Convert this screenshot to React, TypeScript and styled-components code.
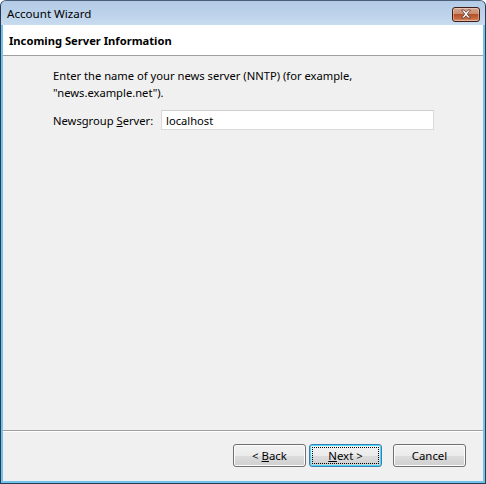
import React from 'react';
import styled, { createGlobalStyle } from 'styled-components';

const GlobalStyle = createGlobalStyle`
  html, body {
    margin: 0;
    padding: 0;
    background: #ffffff;
  }
  body {
    font-family: "Noto Sans", "Open Sans", "DejaVu Sans", sans-serif;
    font-size: 11.2px;
    color: #000;
  }
`;

const Window = styled.div`
  width: 486px;
  height: 484px;
  box-sizing: border-box;
  border: 1px solid #2a3a52;
  border-top-color: #4a5e78;
  border-radius: 6px 6px 0 0;
  background: #6fc3ec;
  display: flex;
  flex-direction: column;
  overflow: hidden;
`;

const TitleBar = styled.div`
  height: 24px;
  flex: none;
  display: flex;
  align-items: center;
  justify-content: space-between;
  padding: 0 5px 0 6px;
  background: linear-gradient(to bottom, #b3cbe6 0%, #bcd2ea 50%, #c8dbef 100%);
`;

const Title = styled.span`
  font-size: 11.6px;
  color: #000;
  padding-top: 1px;
`;

const CloseButton = styled.div`
  width: 28px;
  height: 15px;
  margin-top: 2px;
  box-sizing: border-box;
  border: 1px solid #3d1e18;
  border-radius: 3px;
  background: linear-gradient(to bottom, #d9a58e 0%, #c98a70 45%, #b2522c 50%, #c7683e 80%, #dc9470 100%);
  display: flex;
  align-items: center;
  justify-content: center;
  box-shadow: inset 0 0 0 1px rgba(255, 255, 255, 0.35);
`;

const Client = styled.div`
  flex: 1;
  display: flex;
  flex-direction: column;
  margin: 0 2px 2px 2px;
  background: #f0f0f0;
`;

const Header = styled.div`
  height: 30px;
  flex: none;
  display: flex;
  align-items: center;
  padding-left: 6px;
  background: #ffffff;
  border-bottom: 1px solid #a0a0a0;
`;

const HeaderTitle = styled.span`
  font-weight: bold;
  font-size: 11.2px;
`;

const Body = styled.div`
  flex: 1;
  padding: 11px 48px 0 50px;
  border-bottom: 1px solid #a0a0a0;
`;

const Intro = styled.p`
  margin: 0;
  line-height: 17px;
`;

const FieldRow = styled.div`
  display: flex;
  align-items: center;
  margin-top: 9px;
`;

const Label = styled.label`
  width: 108px;
  flex: none;
`;

const Field = styled.div`
  width: 273px;
  height: 20px;
  box-sizing: border-box;
  border: 1px solid #dadada;
  border-top-color: #cfcfcf;
  background: #ffffff;
  display: flex;
  align-items: center;
  padding-left: 4px;
`;

const Footer = styled.div`
  height: 50px;
  flex: none;
  display: flex;
  justify-content: flex-end;
  align-items: flex-start;
  padding: 12px 17px 0 0;
  box-sizing: border-box;
  border-top: 1px solid #ffffff;
`;

const Button = styled.div<{ $focused?: boolean; $gap?: number }>`
  width: 73px;
  height: 23px;
  box-sizing: border-box;
  margin-left: ${p => p.$gap ?? 0}px;
  border: 1px solid ${p => (p.$focused ? '#3c7fb1' : '#707070')};
  border-radius: 3px;
  background: linear-gradient(to bottom, #f2f2f2 0%, #ebebeb 50%, #dddddd 51%, #cfcfcf 100%);
  box-shadow: inset 0 0 0 1px ${p => (p.$focused ? '#48d8fb' : '#fcfcfc')};
  display: flex;
  align-items: center;
  justify-content: center;
  position: relative;
  font-size: 11.4px;

  ${p =>
    p.$focused &&
    `
    &::after {
      content: '';
      position: absolute;
      inset: 2px;
      border: 1px dotted #000;
    }
  `}
`;

const Key = styled.span`
  text-decoration: underline;
`;

function CloseIcon() {
  return (
    <svg width="12" height="10" viewBox="0 0 12 10">
      <path
        d="M1.5 1 L4 1 L6 3.3 L8 1 L10.5 1 L7.3 5 L10.5 9 L8 9 L6 6.7 L4 9 L1.5 9 L4.7 5 Z"
        fill="#ffffff"
        stroke="#4a2a22"
        strokeWidth="0.7"
      />
    </svg>
  );
}

export default function App() {
  return (
    <>
      <GlobalStyle />
      <Window>
        <TitleBar>
          <Title>Account Wizard</Title>
          <CloseButton>
            <CloseIcon />
          </CloseButton>
        </TitleBar>
        <Client>
          <Header>
            <HeaderTitle>Incoming Server Information</HeaderTitle>
          </Header>
          <Body>
            <Intro>
              Enter the name of your news server (NNTP) (for example,
              <br />
              "news.example.net").
            </Intro>
            <FieldRow>
              <Label>
                Newsgroup <Key>S</Key>erver:
              </Label>
              <Field>localhost</Field>
            </FieldRow>
          </Body>
          <Footer>
            <Button>
              {'<\u00a0'}
              <Key>B</Key>ack
            </Button>
            <Button $focused $gap={3}>
              <Key>N</Key>
              {'ext\u00a0>'}
            </Button>
            <Button $gap={11}>Cancel</Button>
          </Footer>
        </Client>
      </Window>
    </>
  );
}
